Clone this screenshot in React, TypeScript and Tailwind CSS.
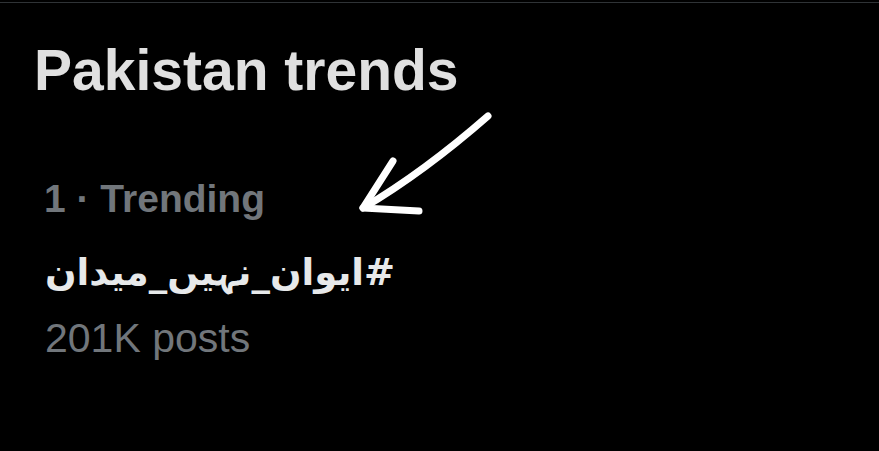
import React from 'react';

const App: React.FC = () => {
  return (
    <div className="relative w-[879px] h-[451px] bg-black overflow-hidden">
      <div className="mt-[2px] border-t border-[#2f3336] flex flex-col">
        {/* Section title */}
        <h2 className="mt-[35px] ml-[34px] text-[57px] leading-[64px] font-bold text-[#e0e0e0] font-['Liberation_Sans',sans-serif]">
          Pakistan trends
        </h2>

        {/* Trend item */}
        <div className="mt-[75px] flex flex-col items-start">
          <div className="ml-[44px] text-[39px] leading-[44px] font-bold text-[#71767b] font-['Liberation_Sans',sans-serif]">
            1 · Trending
          </div>
          <div
            dir="rtl"
            className="mt-[27px] ml-[45px] text-[37px] leading-[50px] font-bold text-[#e7e9ea] font-['DejaVu_Sans',sans-serif]"
          >
            #ایوان_نہیں_میدان
          </div>
          <div className="mt-[17px] ml-[45px] text-[41px] leading-[46px] text-[#71767b] font-['Liberation_Sans',sans-serif]">
            201K posts
          </div>
        </div>
      </div>

      {/* Hand-drawn annotation arrow */}
      <svg
        className="absolute left-0 top-0 pointer-events-none"
        width="879"
        height="451"
        viewBox="0 0 879 451"
        fill="none"
      >
        <path
          d="M488 116 Q424 172 363 208"
          stroke="#ffffff"
          strokeWidth="7"
          strokeLinecap="round"
        />
        <path
          d="M393 161 L363 208 L419 211"
          stroke="#ffffff"
          strokeWidth="7"
          strokeLinecap="round"
          strokeLinejoin="round"
        />
      </svg>
    </div>
  );
};

export default App;
